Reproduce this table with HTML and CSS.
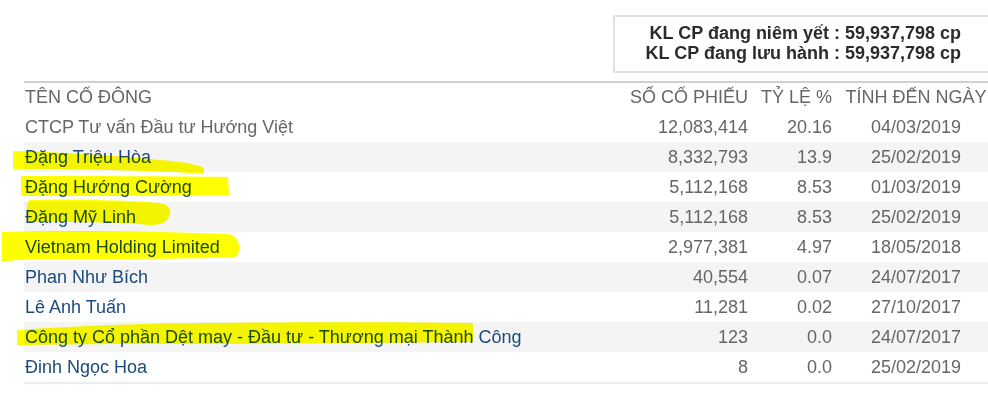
FILE: index.html
```html
<!DOCTYPE html>
<html lang="vi">
<head>
<meta charset="utf-8">
<link rel="stylesheet" href="styles.css">
</head>
<body>
<div class="page">
  <div class="summary">
    <div>KL CP đang niêm yết : 59,937,798 cp</div>
    <div>KL CP đang lưu hành : 59,937,798 cp</div>
  </div>
  <table class="holders">
    <colgroup>
      <col class="c-name"><col class="c-shares"><col class="c-pct"><col class="c-date">
    </colgroup>
    <thead>
      <tr><th class="name">TÊN CỔ ĐÔNG</th><th class="num shares">SỐ CỔ PHIẾU</th><th class="num pct">TỶ LỆ %</th><th class="date">TÍNH ĐẾN NGÀY</th></tr>
    </thead>
    <tbody>
      <tr><td class="name plain">CTCP Tư vấn Đầu tư Hướng Việt</td><td class="num shares">12,083,414</td><td class="num pct">20.16</td><td class="date">04/03/2019</td></tr>
      <tr><td class="name">Đặng Triệu Hòa</td><td class="num shares">8,332,793</td><td class="num pct">13.9</td><td class="date">25/02/2019</td></tr>
      <tr><td class="name">Đặng Hướng Cường</td><td class="num shares">5,112,168</td><td class="num pct">8.53</td><td class="date">01/03/2019</td></tr>
      <tr><td class="name">Đặng Mỹ Linh</td><td class="num shares">5,112,168</td><td class="num pct">8.53</td><td class="date">25/02/2019</td></tr>
      <tr><td class="name">Vietnam Holding Limited</td><td class="num shares">2,977,381</td><td class="num pct">4.97</td><td class="date">18/05/2018</td></tr>
      <tr><td class="name">Phan Như Bích</td><td class="num shares">40,554</td><td class="num pct">0.07</td><td class="date">24/07/2017</td></tr>
      <tr><td class="name">Lê Anh Tuấn</td><td class="num shares">11,281</td><td class="num pct">0.02</td><td class="date">27/10/2017</td></tr>
      <tr><td class="name">Công ty Cổ phần Dệt may - Đầu tư - Thương mại Thành Công</td><td class="num shares">123</td><td class="num pct">0.0</td><td class="date">24/07/2017</td></tr>
      <tr><td class="name">Đinh Ngọc Hoa</td><td class="num shares">8</td><td class="num pct">0.0</td><td class="date">25/02/2019</td></tr>
    </tbody>
  </table>
  <svg class="marker" width="988" height="414" viewBox="0 0 988 414">
    <path d="M13 151 C60 152 120 156 160 160 C185 162 200 165 204 168 L204 174 C180 172 150 171 110 170 C70 169 40 169 13 169 Z"/>
    <path d="M21 176 C80 176 160 176 228 177 L229 195 C160 196 80 196 21 196 Z"/>
    <path d="M29 200 C70 199 130 200 160 203 C172 205 173 214 166 221 C162 225 150 226 140 224 C110 222 70 222 29 222 C26 214 26 206 29 200 Z"/>
    <path d="M2 232 C60 230 150 231 228 234 C240 236 242 250 236 257 C200 259 120 259 40 259 C20 259 8 261 2 262 Z"/>
    <path d="M17 330 C60 327 120 324 200 323 C300 322 400 322 473 323 L473 342 C380 343 250 344 140 344 C80 344 40 345 17 345 Z"/>
  </svg>
</div>
</body>
</html>
```
FILE: styles.css
```css
html, body {
  margin: 0;
  padding: 0;
  background: #fff;
}
.page {
  position: relative;
  width: 988px;
  height: 414px;
  overflow: hidden;
  font-family: "Liberation Sans", Arial, sans-serif;
  font-size: 18px;
}
.summary {
  margin: 15px 0 0 613px;
  width: 388px;
  box-sizing: border-box;
  height: 58px;
  border: 2px solid #e1e1e1;
  padding: 6px 38px 0 0;
  text-align: right;
  font-weight: bold;
  line-height: 20px;
  color: #2b2b2b;
}
.holders {
  margin: 8px 0 0 24px;
  width: 964px;
  border-collapse: collapse;
  table-layout: fixed;
  border-top: 2px solid #d0d0d0;
  border-bottom: 2px solid #ececec;
}
.c-shares { width: 140px; }
.c-pct { width: 92px; }
.c-date { width: 144px; }
.holders th {
  font-weight: normal;
  color: #666;
  height: 29px;
  padding: 0;
  line-height: 29px;
  text-align: left;
}
.holders td {
  height: 30px;
  padding: 0;
  line-height: 30px;
  color: #666;
  white-space: nowrap;
}
.holders tbody tr:nth-child(even) td {
  background: #f4f4f4;
}
.holders td.name {
  color: #1b4b7c;
}
.holders td.name.plain {
  color: #666;
}
.holders .name { padding-left: 1px; }
.holders .num { text-align: right; }
.holders .shares { padding-right: 4px; }
.holders .pct { padding-right: 12px; }
.holders .date { text-align: center; }
.holders th.num { text-align: right; }
.holders th.date { text-align: center; }
.marker {
  position: absolute;
  left: 0;
  top: 0;
  fill: #ffff00;
  mix-blend-mode: multiply;
  pointer-events: none;
}
```
